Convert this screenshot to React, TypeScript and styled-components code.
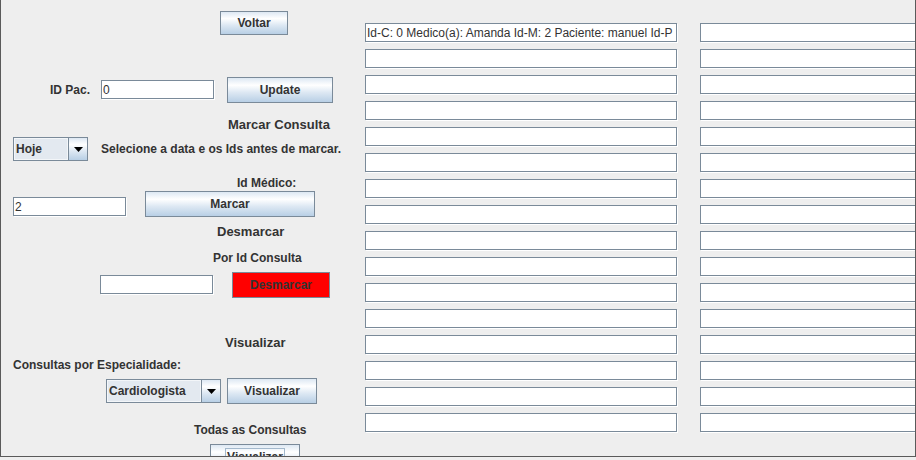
import React from "react";
import styled, { createGlobalStyle } from "styled-components";

const GlobalStyle = createGlobalStyle`
  html, body { margin: 0; padding: 0; background: #eeeeee; }
  body { font-family: "Liberation Sans", Arial, sans-serif; }
`;

const FONT = `"Liberation Sans", Arial, sans-serif`;
const BTN_GRADIENT =
  "linear-gradient(to bottom, #dde8f3 0%, #ffffff 30%, #dde8f3 60%, #b8cfe5 100%)";

const Frame = styled.div`
  box-sizing: border-box;
  width: 916px;
  height: 457px;
  border-left: 1px solid #5a5a5a;
  border-right: 1px solid #5a5a5a;
  border-bottom: 1px solid #5a5a5a;
  background: #eeeeee;
  overflow: hidden;
  display: grid;
  grid-template-columns: 364px 1fr;
  align-items: start;
  color: #333333;
  font-family: ${FONT};
`;

const LeftPanel = styled.div`
  display: flex;
  flex-direction: column;
`;

const Row = styled.div<{ $mt: number; $h: number; $pl: number; $align?: string }>`
  display: flex;
  align-items: ${(p) => p.$align ?? "center"};
  margin-top: ${(p) => p.$mt}px;
  height: ${(p) => p.$h}px;
  padding-left: ${(p) => p.$pl}px;
  flex: none;
`;

const Label = styled.span<{ $w?: number; $ml?: number }>`
  font-weight: bold;
  font-size: 12px;
  white-space: nowrap;
  color: #333333;
  margin-left: ${(p) => p.$ml ?? 0}px;
  ${(p) => (p.$w ? `width: ${p.$w}px; flex: none;` : "")}
`;

const Title = styled.span`
  font-weight: bold;
  font-size: 13px;
  white-space: nowrap;
  color: #333333;
`;

const Field = styled.input<{ $w: number; $ml?: number }>`
  box-sizing: border-box;
  flex: none;
  width: ${(p) => p.$w}px;
  height: 19px;
  margin: 0 0 1px ${(p) => p.$ml ?? 0}px;
  border: 1px solid #7a8a99;
  border-radius: 0;
  box-shadow: 1px 1px 0 #ffffff;
  background: #ffffff;
  padding: 0 1px;
  font-family: ${FONT};
  font-size: 12px;
  color: #333333;
  outline: none;
`;

const Button = styled.button<{ $w: number; $h?: number; $ml?: number; $danger?: boolean }>`
  box-sizing: border-box;
  flex: none;
  width: ${(p) => p.$w}px;
  height: ${(p) => p.$h ?? 26}px;
  margin: 0 0 0 ${(p) => p.$ml ?? 0}px;
  border: 1px solid #7a8a99;
  border-radius: 0;
  padding: 0;
  background: ${(p) => (p.$danger ? "#ff0000" : BTN_GRADIENT)};
  font-family: ${FONT};
  font-weight: bold;
  font-size: 12px;
  color: #333333;
  display: flex;
  align-items: center;
  justify-content: center;
`;

const FocusedButton = styled(Button)`
  align-items: flex-start;
  padding-top: 3px;
`;

const FocusRing = styled.span`
  border: 1px solid #a3b8cc;
  line-height: 16px;
  padding: 0 1px;
`;

const Combo = styled.div<{ $w: number; $h: number; $ml?: number }>`
  box-sizing: border-box;
  flex: none;
  display: flex;
  width: ${(p) => p.$w}px;
  height: ${(p) => p.$h}px;
  margin-left: ${(p) => p.$ml ?? 0}px;
  border: 1px solid #7a8a99;
  background: #ffffff;
`;

const ComboValue = styled.div`
  flex: 1;
  display: flex;
  align-items: center;
  padding-left: 2px;
  background: #e3e9f0;
  box-shadow: inset 0 0 0 1px #f3f6f9;
  font-weight: bold;
  font-size: 12px;
  color: #333333;
  white-space: nowrap;
`;

const ComboArrow = styled.div`
  box-sizing: border-box;
  width: 19px;
  flex: none;
  border-left: 1px solid #7a8a99;
  background: ${BTN_GRADIENT};
  display: flex;
  align-items: center;
  justify-content: center;
`;

const ListGrid = styled.div`
  display: grid;
  grid-template-columns: 312px 312px;
  column-gap: 23px;
  grid-auto-rows: 26px;
  padding-top: 23px;
  align-items: start;
`;

const Arrow = () => (
  <svg width="9" height="5" viewBox="0 0 9 5">
    <polygon points="0,0 9,0 4.5,5" fill="#000000" />
  </svg>
);

const consultas: string[][] = Array.from({ length: 16 }, (_, i) =>
  i === 0
    ? ["Id-C: 0 Medico(a): Amanda Id-M: 2 Paciente: manuel Id-P", ""]
    : ["", ""]
);

export default function App() {
  return (
    <>
      <GlobalStyle />
      <Frame>
        <LeftPanel>
          <Row $mt={11} $h={24} $pl={219}>
            <Button $w={68} $h={24}>Voltar</Button>
          </Row>
          <Row $mt={42} $h={26} $pl={49}>
            <Label $w={51}>ID Pac.</Label>
            <Field $w={113} readOnly value="0" />
            <Button $w={106} $ml={13}>Update</Button>
          </Row>
          <Row $mt={13} $h={16} $pl={227}>
            <Title>Marcar Consulta</Title>
          </Row>
          <Row $mt={5} $h={24} $pl={12}>
            <Combo $w={75} $h={24}>
              <ComboValue>Hoje</ComboValue>
              <ComboArrow><Arrow /></ComboArrow>
            </Combo>
            <Label $ml={13}>Selecione a data e os Ids antes de marcar.</Label>
          </Row>
          <Row $mt={15} $h={14} $pl={236}>
            <Label>Id Médico:</Label>
          </Row>
          <Row $mt={1} $h={26} $pl={12} $align="flex-end">
            <Field $w={113} readOnly value="2" />
            <Button $w={170} $ml={19}>Marcar</Button>
          </Row>
          <Row $mt={6} $h={16} $pl={216}>
            <Title>Desmarcar</Title>
          </Row>
          <Row $mt={12} $h={14} $pl={212}>
            <Label>Por Id Consulta</Label>
          </Row>
          <Row $mt={7} $h={26} $pl={99}>
            <Field $w={113} readOnly value="" />
            <Button $w={98} $ml={19} $danger>Desmarcar</Button>
          </Row>
          <Row $mt={36} $h={16} $pl={224}>
            <Title>Visualizar</Title>
          </Row>
          <Row $mt={8} $h={14} $pl={12}>
            <Label>Consultas por Especialidade:</Label>
          </Row>
          <Row $mt={6} $h={26} $pl={105}>
            <Combo $w={115} $h={24}>
              <ComboValue>Cardiologista</ComboValue>
              <ComboArrow><Arrow /></ComboArrow>
            </Combo>
            <Button $w={90} $ml={6}>Visualizar</Button>
          </Row>
          <Row $mt={19} $h={14} $pl={193}>
            <Label>Todas as Consultas</Label>
          </Row>
          <Row $mt={7} $h={26} $pl={209}>
            <FocusedButton $w={90}>
              <FocusRing>Visualizar</FocusRing>
            </FocusedButton>
          </Row>
        </LeftPanel>
        <ListGrid>
          {consultas.map((pair, i) =>
            pair.map((text, j) => (
              <Field key={`${i}-${j}`} $w={312} readOnly value={text} />
            ))
          )}
        </ListGrid>
      </Frame>
    </>
  );
}
